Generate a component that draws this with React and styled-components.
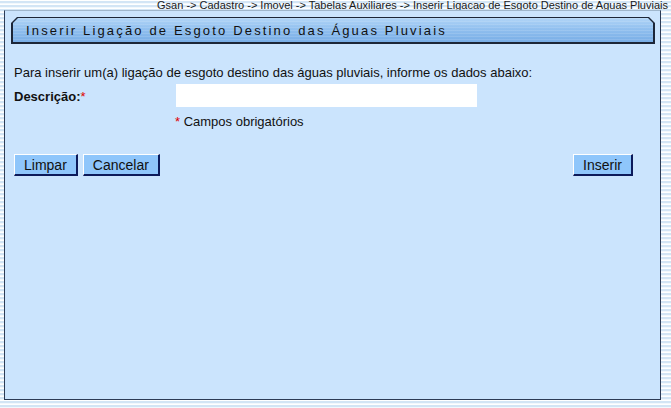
import React from "react";
import styled, { createGlobalStyle } from "styled-components";

const Global = createGlobalStyle`
  html, body { margin: 0; padding: 0; }
  body {
    width: 671px;
    height: 408px;
    overflow: hidden;
    font-family: "Liberation Sans", Arial, sans-serif;
    background: repeating-linear-gradient(to bottom, #ffffff 0 1px, #d3e5f5 1px 3px, #f2f8fd 3px 4px);
  }
`;

const Page = styled.div`
  width: 671px;
  height: 408px;
  display: flex;
  flex-direction: column;
`;

const Crumb = styled.div`
  height: 10px;
  line-height: 10px;
  font-size: 11px;
  color: #1a1a1a;
  text-align: right;
  padding-right: 3px;
  white-space: nowrap;
`;

const Panel = styled.div`
  margin-left: 4px;
  width: 655px;
  height: 388px;
  background: #cbe4fd;
  border: 1px solid #2c3b55;
  border-top-color: #9fb6cc;
  display: flex;
  flex-direction: column;
`;

const TitleOuter = styled.div`
  margin: 6px 5px 0 6px;
  height: 27px;
  background: #1c2638;
  clip-path: polygon(6px 0, calc(100% - 6px) 0, 100% 6px, 100% 100%, 0 100%, 0 6px);
  padding: 1px 2px 2px 2px;
  box-sizing: border-box;
  display: flex;
`;

const TitleInner = styled.div`
  flex: 1;
  clip-path: polygon(5px 0, calc(100% - 5px) 0, 100% 5px, 100% 100%, 0 100%, 0 5px);
  background:
    repeating-linear-gradient(to bottom, rgba(255,255,255,0.12) 0 1px, rgba(255,255,255,0) 1px 3px),
    linear-gradient(to bottom, #b2d5f7 0%, #94c2f0 40%, #78ade6 100%);
  display: flex;
  align-items: center;
  padding-left: 13px;
  font-size: 13px;
  letter-spacing: 2.16px;
  color: #111;
`;

const Body = styled.div`
  padding: 21px 0 0 9px;
  display: flex;
  flex-direction: column;
`;

const Intro = styled.div`
  font-size: 13px;
  color: #111;
  line-height: 16px;
`;

const FieldRow = styled.div`
  display: flex;
  align-items: center;
  margin-top: 3px;
`;

const Label = styled.div`
  width: 162px;
  font-size: 13px;
  font-weight: bold;
  color: #111;
  padding-top: 2px;
`;

const Req = styled.span`
  color: #e00000;
  font-weight: normal;
`;

const Input = styled.input`
  width: 301px;
  height: 23px;
  box-sizing: border-box;
  border: none;
  background: #fff;
  margin: 0;
  padding: 0 3px;
`;

const Note = styled.div`
  margin: 7px 0 0 161px;
  font-size: 13px;
  line-height: 16px;
  color: #111;
`;

const Actions = styled.div`
  display: flex;
  align-items: center;
  margin-top: 24px;
  padding-right: 22px;
`;

const Button = styled.button`
  height: 22px;
  padding: 0 ${(p) => p.$pad}px;
  margin-right: 5px;
  background: #8fc6fb;
  border-style: solid;
  border-width: 1px 2px 2px 1px;
  border-color: #ffffff #0c1a5a #0c1a5a #ffffff;
  font-family: "Liberation Sans", Arial, sans-serif;
  font-size: 14px;
  color: #111;
  cursor: pointer;
  box-sizing: border-box;
`;

const Spacer = styled.div`
  flex: 1;
`;

export default function App() {
  return (
    <Page>
      <Global />
      <Crumb>
        Gsan -&gt; Cadastro -&gt; Imovel -&gt; Tabelas Auxiliares -&gt; Inserir Ligacao de Esgoto Destino de Aguas Pluviais
      </Crumb>
      <Panel>
        <TitleOuter>
          <TitleInner>Inserir Ligação de Esgoto Destino das Águas Pluviais</TitleInner>
        </TitleOuter>
        <Body>
          <Intro>Para inserir um(a) ligação de esgoto destino das águas pluviais, informe os dados abaixo:</Intro>
          <FieldRow>
            <Label>
              Descrição:<Req>*</Req>
            </Label>
            <Input type="text" />
          </FieldRow>
          <Note>
            <Req>*</Req> Campos obrigatórios
          </Note>
          <Actions>
            <Button $pad={9}>Limpar</Button>
            <Button $pad={9}>Cancelar</Button>
            <Spacer />
            <Button $pad={9}>Inserir</Button>
          </Actions>
        </Body>
      </Panel>
    </Page>
  );
}
